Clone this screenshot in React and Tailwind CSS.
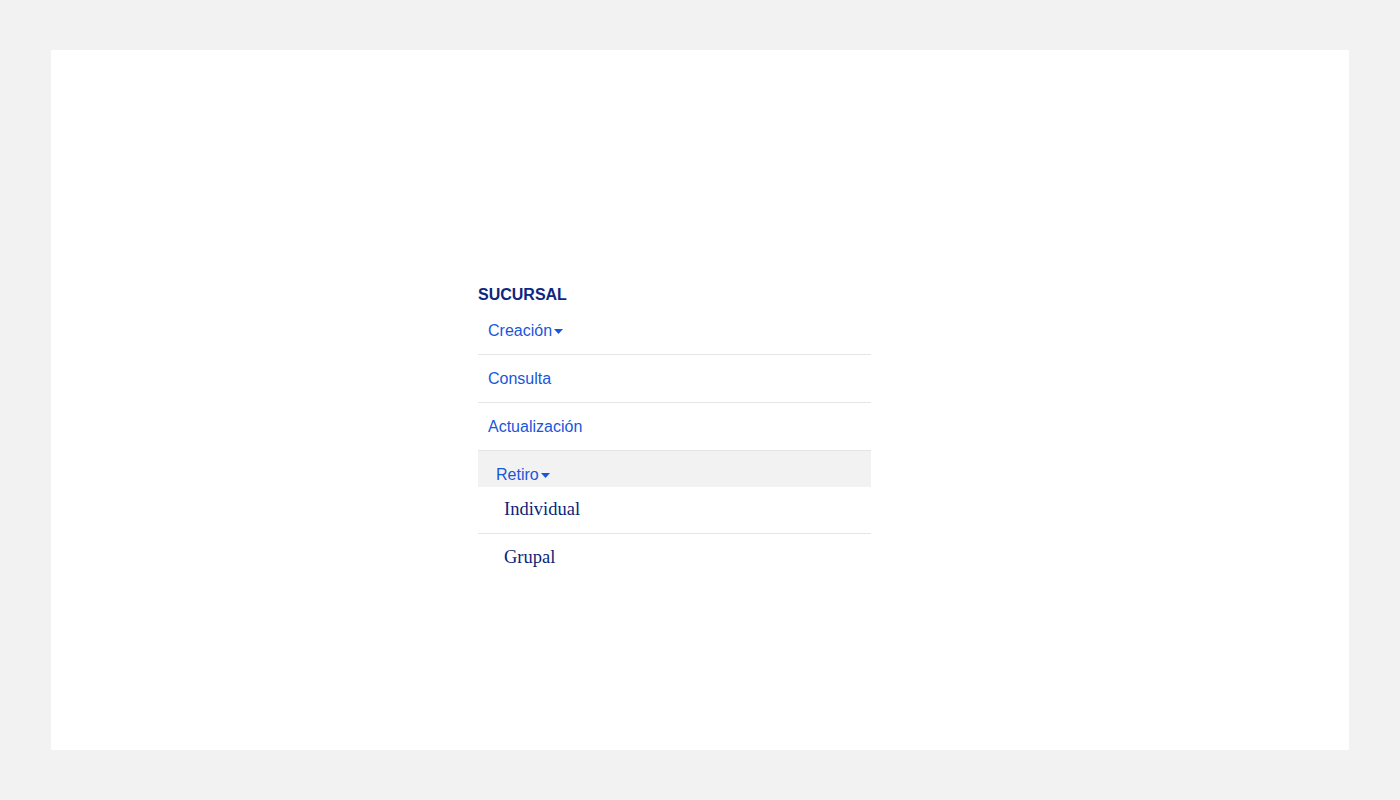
export default function App() {
  const Caret = () => (
    <svg width="9" height="5" viewBox="0 0 9 5" className="ml-[2px] mt-[1px] inline-block">
      <path d="M0 0 L9 0 L4.5 5 Z" fill="currentColor" />
    </svg>
  );
  return (
    <div className="min-h-[800px] w-full bg-[#f2f2f2] px-[51px] py-[50px]">
      <div className="flex h-[700px] w-full bg-white pl-[427px] pt-[234px]">
        <div className="w-[393px]" style={{ fontFamily: '"Liberation Sans", Arial, sans-serif' }}>
          <div className="h-[23px] text-[16px] font-bold leading-[22px] text-[#0d2680]">SUCURSAL</div>
          <div className="flex h-[48px] items-center border-b border-[#e5e5e5] pl-[10px] pt-[1px] text-[16px] text-[#1a56db]">
            <span>Creación</span>
            <Caret />
          </div>
          <div className="flex h-[48px] items-center border-b border-[#e5e5e5] pl-[10px] text-[16px] text-[#1a56db]">
            Consulta
          </div>
          <div className="flex h-[48px] items-center border-b border-[#e5e5e5] pl-[10px] text-[16px] text-[#1a56db]">
            Actualización
          </div>
          <div className="relative">
            <div className="flex h-[48px] items-center bg-[#f2f2f2] pl-[18px] text-[16px] text-[#1a56db]">
              <span>Retiro</span>
              <Caret />
            </div>
            <div
              className="absolute left-0 right-0 top-[36px] bg-white text-[18.5px] text-[#0c1f78]"
              style={{ fontFamily: '"Liberation Serif", "Times New Roman", serif' }}
            >
              <div className="flex h-[47px] items-center border-b border-[#e5e5e5] pl-[26px]">Individual</div>
              <div className="flex h-[48px] items-center pl-[26px]">Grupal</div>
            </div>
          </div>
        </div>
      </div>
    </div>
  );
}
